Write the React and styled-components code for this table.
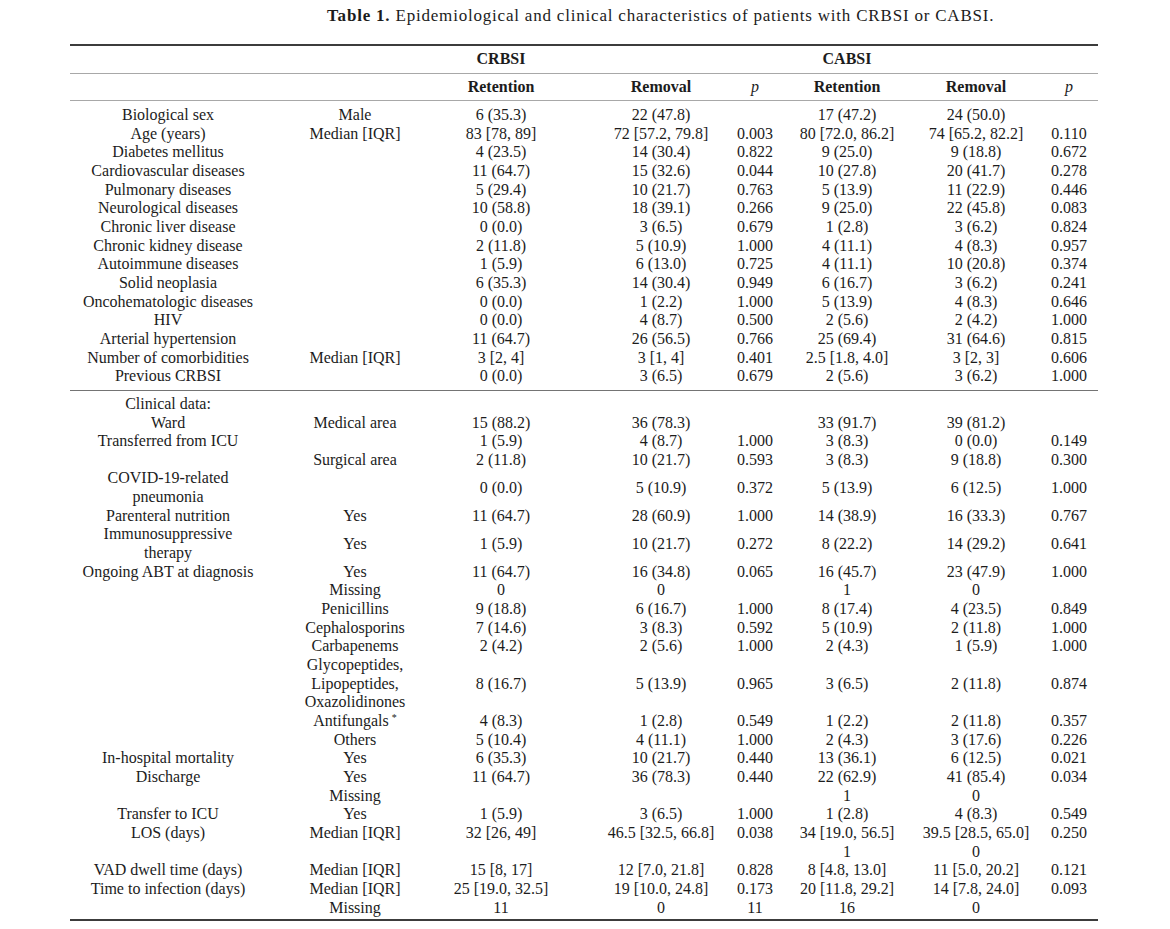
import React from "react";
import styled, { createGlobalStyle } from "styled-components";

const GlobalStyle = createGlobalStyle`
  html, body {
    margin: 0;
    padding: 0;
    background: #ffffff;
  }
  body {
    font-family: "Liberation Serif", "Times New Roman", serif;
    color: #1c1c1c;
  }
`;

const LINE = 18.65;

const Page = styled.div`
  width: 1028px;
  padding: 6px 0 0 70px;
`;

const Caption = styled.div`
  margin-left: 257px;
  font-size: 17px;
  letter-spacing: 0.8px;
  line-height: 20px;
  white-space: nowrap;
  b {
    font-weight: 700;
  }
`;

const Table = styled.div`
  margin-top: 18px;
  border-top: 2px solid #3c3c3c;
  border-bottom: 2px solid #3c3c3c;
  font-size: 16px;
  line-height: ${LINE}px;
`;

const Row = styled.div`
  display: grid;
  grid-template-columns: 235px 100px 192px 128px 60px 124px 134px 52px;
  height: ${(p) => (p.$h ? `${p.$h}px` : "auto")};
  border-bottom: ${(p) => (p.$rule ? "1px solid #a8a8a8" : "none")};
`;

const Cell = styled.div`
  display: flex;
  justify-content: center;
  align-items: center;
  text-align: center;
  white-space: nowrap;
  min-height: ${LINE}px;
  padding-right: ${(p) => (p.$first ? "39px" : "0")};
  font-weight: ${(p) => (p.$bold ? 700 : 400)};
  font-style: ${(p) => (p.$italic ? "italic" : "normal")};
`;

const Section = styled.div`
  padding: ${(p) => p.$pad};
  border-bottom: ${(p) => (p.$rule ? "1px solid #747474" : "none")};
`;

const Star = styled.span`
  font-size: 10px;
  line-height: 0;
  position: relative;
  top: -5px;
  margin-left: 3px;
`;

const section1 = [
  ["Biological sex", "Male", "6 (35.3)", "22 (47.8)", "", "17 (47.2)", "24 (50.0)", ""],
  ["Age (years)", "Median [IQR]", "83 [78, 89]", "72 [57.2, 79.8]", "0.003", "80 [72.0, 86.2]", "74 [65.2, 82.2]", "0.110"],
  ["Diabetes mellitus", "", "4 (23.5)", "14 (30.4)", "0.822", "9 (25.0)", "9 (18.8)", "0.672"],
  ["Cardiovascular diseases", "", "11 (64.7)", "15 (32.6)", "0.044", "10 (27.8)", "20 (41.7)", "0.278"],
  ["Pulmonary diseases", "", "5 (29.4)", "10 (21.7)", "0.763", "5 (13.9)", "11 (22.9)", "0.446"],
  ["Neurological diseases", "", "10 (58.8)", "18 (39.1)", "0.266", "9 (25.0)", "22 (45.8)", "0.083"],
  ["Chronic liver disease", "", "0 (0.0)", "3 (6.5)", "0.679", "1 (2.8)", "3 (6.2)", "0.824"],
  ["Chronic kidney disease", "", "2 (11.8)", "5 (10.9)", "1.000", "4 (11.1)", "4 (8.3)", "0.957"],
  ["Autoimmune diseases", "", "1 (5.9)", "6 (13.0)", "0.725", "4 (11.1)", "10 (20.8)", "0.374"],
  ["Solid neoplasia", "", "6 (35.3)", "14 (30.4)", "0.949", "6 (16.7)", "3 (6.2)", "0.241"],
  ["Oncohematologic diseases", "", "0 (0.0)", "1 (2.2)", "1.000", "5 (13.9)", "4 (8.3)", "0.646"],
  ["HIV", "", "0 (0.0)", "4 (8.7)", "0.500", "2 (5.6)", "2 (4.2)", "1.000"],
  ["Arterial hypertension", "", "11 (64.7)", "26 (56.5)", "0.766", "25 (69.4)", "31 (64.6)", "0.815"],
  ["Number of comorbidities", "Median [IQR]", "3 [2, 4]", "3 [1, 4]", "0.401", "2.5 [1.8, 4.0]", "3 [2, 3]", "0.606"],
  ["Previous CRBSI", "", "0 (0.0)", "3 (6.5)", "0.679", "2 (5.6)", "3 (6.2)", "1.000"],
];

const section2 = [
  ["Clinical data:", "", "", "", "", "", "", ""],
  ["Ward", "Medical area", "15 (88.2)", "36 (78.3)", "", "33 (91.7)", "39 (81.2)", ""],
  ["Transferred from ICU", "", "1 (5.9)", "4 (8.7)", "1.000", "3 (8.3)", "0 (0.0)", "0.149"],
  ["", "Surgical area", "2 (11.8)", "10 (21.7)", "0.593", "3 (8.3)", "9 (18.8)", "0.300"],
  [["COVID-19-related", "pneumonia"], "", "0 (0.0)", "5 (10.9)", "0.372", "5 (13.9)", "6 (12.5)", "1.000"],
  ["Parenteral nutrition", "Yes", "11 (64.7)", "28 (60.9)", "1.000", "14 (38.9)", "16 (33.3)", "0.767"],
  [["Immunosuppressive", "therapy"], "Yes", "1 (5.9)", "10 (21.7)", "0.272", "8 (22.2)", "14 (29.2)", "0.641"],
  ["Ongoing ABT at diagnosis", "Yes", "11 (64.7)", "16 (34.8)", "0.065", "16 (45.7)", "23 (47.9)", "1.000"],
  ["", "Missing", "0", "0", "", "1", "0", ""],
  ["", "Penicillins", "9 (18.8)", "6 (16.7)", "1.000", "8 (17.4)", "4 (23.5)", "0.849"],
  ["", "Cephalosporins", "7 (14.6)", "3 (8.3)", "0.592", "5 (10.9)", "2 (11.8)", "1.000"],
  ["", "Carbapenems", "2 (4.2)", "2 (5.6)", "1.000", "2 (4.3)", "1 (5.9)", "1.000"],
  ["", ["Glycopeptides,", "Lipopeptides,", "Oxazolidinones"], "8 (16.7)", "5 (13.9)", "0.965", "3 (6.5)", "2 (11.8)", "0.874"],
  ["", "STAR", "4 (8.3)", "1 (2.8)", "0.549", "1 (2.2)", "2 (11.8)", "0.357"],
  ["", "Others", "5 (10.4)", "4 (11.1)", "1.000", "2 (4.3)", "3 (17.6)", "0.226"],
  ["In-hospital mortality", "Yes", "6 (35.3)", "10 (21.7)", "0.440", "13 (36.1)", "6 (12.5)", "0.021"],
  ["Discharge", "Yes", "11 (64.7)", "36 (78.3)", "0.440", "22 (62.9)", "41 (85.4)", "0.034"],
  ["", "Missing", "", "", "", "1", "0", ""],
  ["Transfer to ICU", "Yes", "1 (5.9)", "3 (6.5)", "1.000", "1 (2.8)", "4 (8.3)", "0.549"],
  ["LOS (days)", "Median [IQR]", "32 [26, 49]", "46.5 [32.5, 66.8]", "0.038", "34 [19.0, 56.5]", "39.5 [28.5, 65.0]", "0.250"],
  ["", "", "", "", "", "1", "0", ""],
  ["VAD dwell time (days)", "Median [IQR]", "15 [8, 17]", "12 [7.0, 21.8]", "0.828", "8 [4.8, 13.0]", "11 [5.0, 20.2]", "0.121"],
  ["Time to infection (days)", "Median [IQR]", "25 [19.0, 32.5]", "19 [10.0, 24.8]", "0.173", "20 [11.8, 29.2]", "14 [7.8, 24.0]", "0.093"],
  ["", "Missing", "11", "0", "11", "16", "0", ""],
];

function renderValue(v) {
  if (v === "STAR") {
    return (
      <span>
        Antifungals<Star>*</Star>
      </span>
    );
  }
  if (Array.isArray(v)) {
    return (
      <span>
        {v.map((line, i) => (
          <React.Fragment key={i}>
            {i > 0 && <br />}
            {line}
          </React.Fragment>
        ))}
      </span>
    );
  }
  return v;
}

function DataRow({ cells }) {
  return (
    <Row>
      {cells.map((c, i) => (
        <Cell key={i} $first={i === 0}>
          {renderValue(c)}
        </Cell>
      ))}
    </Row>
  );
}

export default function App() {
  return (
    <>
      <GlobalStyle />
      <Page>
        <Caption>
          <b>Table 1.</b> Epidemiological and clinical characteristics of patients with CRBSI or CABSI.
        </Caption>
        <Table>
          <Row $h={27} $rule>
            <Cell $first />
            <Cell />
            <Cell $bold>CRBSI</Cell>
            <Cell />
            <Cell />
            <Cell $bold>CABSI</Cell>
            <Cell />
            <Cell />
          </Row>
          <Row $h={26} $rule>
            <Cell $first />
            <Cell />
            <Cell $bold>Retention</Cell>
            <Cell $bold>Removal</Cell>
            <Cell $italic>p</Cell>
            <Cell $bold>Retention</Cell>
            <Cell $bold>Removal</Cell>
            <Cell $italic>p</Cell>
          </Row>
          <Section $pad="5px 0 4px" $rule>
            {section1.map((r, i) => (
              <DataRow key={i} cells={r} />
            ))}
          </Section>
          <Section $pad="4px 0 2px">
            {section2.map((r, i) => (
              <DataRow key={i} cells={r} />
            ))}
          </Section>
        </Table>
      </Page>
    </>
  );
}
